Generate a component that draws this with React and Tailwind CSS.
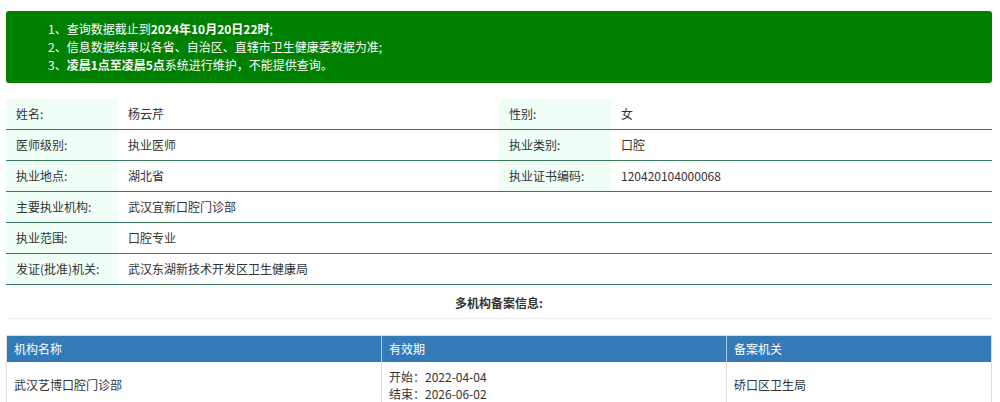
const ROWS = [
  [['姓名:', '杨云芹'], ['性别:', '女']],
  [['医师级别:', '执业医师'], ['执业类别:', '口腔']],
  [['执业地点:', '湖北省'], ['执业证书编码:', '120420104000068']],
  [['主要执业机构:', '武汉宜新口腔门诊部']],
  [['执业范围:', '口腔专业']],
  [['发证(批准)机关:', '武汉东湖新技术开发区卫生健康局']],
];

function Pair({ label, value, wide }) {
  return (
    <div className={`flex ${wide ? 'flex-1' : 'w-[493px]'}`}>
      <div className="w-[112px] shrink-0 bg-[#effff7] pl-[10px]">{label}</div>
      <div className="flex-1 pl-[10px]">{value}</div>
    </div>
  );
}

export default function App() {
  return (
    <div
      className="w-[1000px] h-[402px] overflow-hidden bg-white pl-[6px] pr-[8px] pt-[11px] text-[12px] text-[#333]"
      style={{ fontFamily: '"Noto Sans CJK SC", "Noto Sans", sans-serif' }}
    >
      <div className="rounded-[3px] bg-[#008000] pl-[42px] py-[9px] leading-[18px] text-white">
        <p>1、查询数据截止到<b>2024年10月20日22时</b>;</p>
        <p>2、信息数据结果以各省、自治区、直辖市卫生健康委数据为准;</p>
        <p>3、<b>凌晨1点至凌晨5点</b>系统进行维护，不能提供查询。</p>
      </div>

      <div className="mt-[16px]">
        {ROWS.map((row, i) => (
          <div key={i} className="flex h-[31px] items-stretch border-b border-[#3b7d5b] leading-[30px]">
            {row.length === 2 ? (
              <>
                <Pair label={row[0][0]} value={row[0][1]} />
                <Pair label={row[1][0]} value={row[1][1]} wide />
              </>
            ) : (
              <Pair label={row[0][0]} value={row[0][1]} wide />
            )}
          </div>
        ))}
      </div>

      <div className="h-[34px] border-b border-[#eeeeee] text-center font-bold leading-[36px]">多机构备案信息:</div>

      <div className="mt-[16px] border border-[#dddddd]">
        <div className="flex h-[26px] bg-[#337ab7] leading-[26px] text-white">
          <div className="w-[375px] border-r border-[#a9c6e2] pl-[7px]">机构名称</div>
          <div className="w-[345px] border-r border-[#a9c6e2] pl-[7px]">有效期</div>
          <div className="flex-1 pl-[7px]">备案机关</div>
        </div>
        <div className="flex h-[44px] items-center leading-[17px]">
          <div className="w-[375px] self-stretch flex items-center border-r border-[#dddddd] pl-[7px]">武汉艺博口腔门诊部</div>
          <div className="w-[345px] self-stretch border-r border-[#dddddd] pl-[7px] pt-[6px]">
            <p>开始：2022-04-04</p>
            <p>结束：2026-06-02</p>
          </div>
          <div className="flex-1 pl-[7px]">硚口区卫生局</div>
        </div>
      </div>
    </div>
  );
}
